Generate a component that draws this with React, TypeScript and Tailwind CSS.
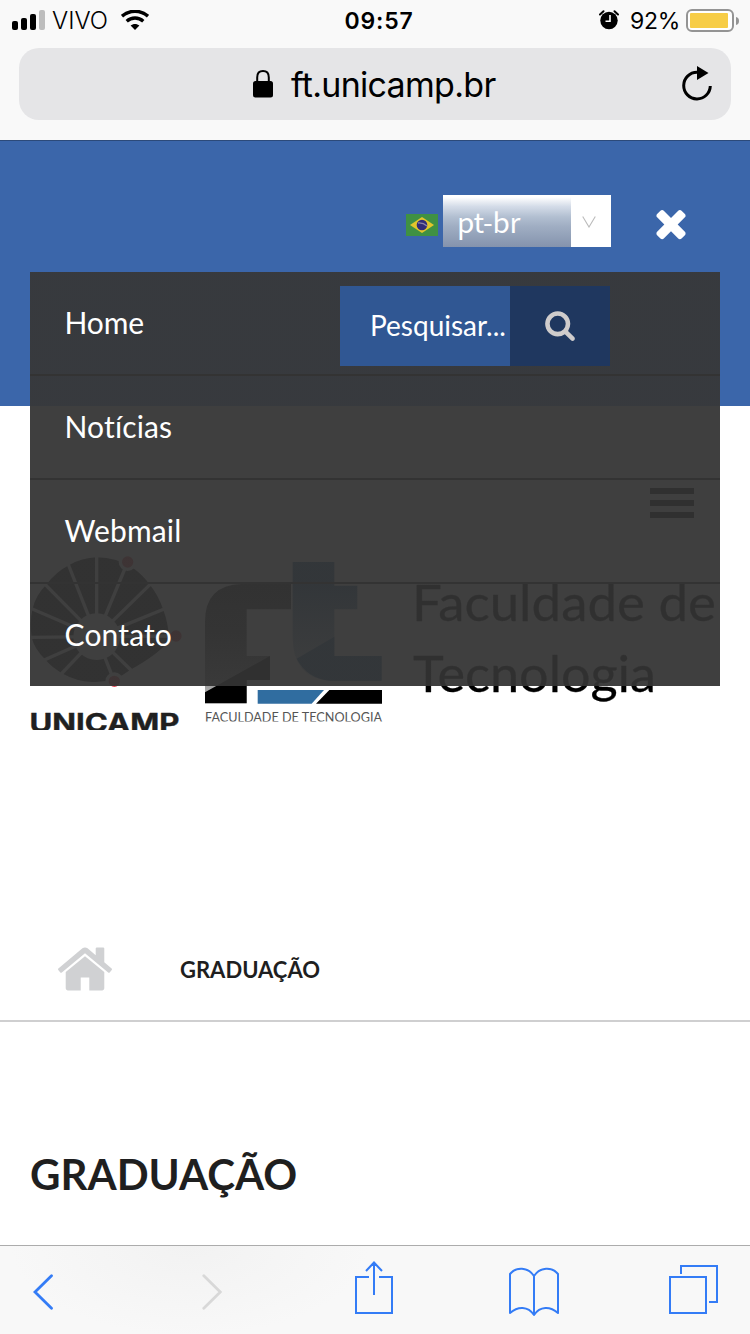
import React from "react";

const TIMES =
  "M1490 1322q0 40-28 68l-136 136q-28 28-68 28t-68-28l-294-294-294 294q-28 28-68 28t-68-28l-136-136q-28-28-28-68t28-68l294-294-294-294q-28-28-28-68t28-68l136-136q28-28 68-28t68 28l294 294 294-294q28-28 68-28t68 28l136 136q28 28 28 68t-28 68l-294 294 294 294q28 28 28 68z";
const HOME =
  "M1472 992v480q0 26-19 45t-45 19h-384v-384h-256v384h-384q-26 0-45-19t-19-45v-480q0-1 .5-3t.5-3l575-474 575 474q1 2 1 6zm223-69l-62 74q-8 9-21 11h-3q-13 0-21-7l-692-577-692 577q-12 8-24 7-13-2-21-11l-62-74q-8-10-7-23.5t11-21.5l719-599q32-26 76-26t76 26l244 204v-195q0-14 9-23t23-9h192q14 0 23 9t9 23v408l219 182q10 8 11 21.5t-7 23.5z";
const SEARCH =
  "M1216 832q0-185-131.5-316.5t-316.5-131.5-316.5 131.5-131.5 316.5 131.5 316.5 316.5 131.5 316.5-131.5 131.5-316.5zm512 832q0 52-38 90t-90 38q-54 0-90-38l-343-342q-179 124-399 124-143 0-273.5-55.5t-225-150-150-225-55.5-273.5 55.5-273.5 150-225 225-150 273.5-55.5 273.5 55.5 225 150 150 225 55.5 273.5q0 220-124 399l343 343q37 37 37 90z";

function Glyph({ d, className }: { d: string; className: string }) {
  return (
    <svg viewBox="0 0 1792 1792" className={className} fill="currentColor">
      <path d={d} />
    </svg>
  );
}

function StatusBar() {
  return (
    <div className="grid h-10 grid-cols-3 items-center pl-3 pr-[11px] text-[24px] leading-10 text-black">
      <div className="flex items-center">
        <svg viewBox="0 0 34 20" className="h-5 w-[34px] shrink-0">
          <rect x="0" y="11" width="6" height="9" rx="2" />
          <rect x="9" y="8" width="6" height="12" rx="2" />
          <rect x="18" y="4" width="6" height="16" rx="2" />
          <rect x="27" y="0" width="6" height="20" rx="2" fill="#bdbdbd" />
        </svg>
        <span className="ml-[6px] w-[56px] whitespace-nowrap pt-0.5 font-light leading-[38px]">VIVO</span>
        <svg viewBox="0 0 28 20" className="ml-[13px] h-5 w-7" fill="none" stroke="#000">
          <path d="M1 6.2C8.500-.4 19.500-.4 27 6.200" strokeWidth="3.400" />
          <path d="M5.700 11.200C10.500 7 17.500 7 22.300 11.200" strokeWidth="3.400" />
          <path d="M9.600 15.600C12 13.300 16 13.300 18.400 15.600L14 20z" fill="#000" stroke="none" />
        </svg>
      </div>
      <div className="pl-[7px] pt-0.5 text-center text-[23px] font-semibold leading-[38px] tracking-[0.8px]">09:57</div>
      <div className="flex items-center justify-end">
        <svg viewBox="0 0 20 20" className="mr-px h-5 w-5">
          <circle cx="10" cy="10.500" r="8.700" />
          <path d="M1 4.500 4.500 1.200M19 4.500 15.500 1.200" stroke="#000" strokeWidth="2" strokeLinecap="round" />
          <path d="M11 5v6.200H6.500" fill="none" stroke="#fff" strokeWidth="1.600" />
        </svg>
        <span className="ml-[10px] w-[50px] whitespace-nowrap pt-0.5 text-[23px] leading-[38px] tracking-[-0.3px]">92%</span>
        <svg viewBox="0 0 53 24" className="ml-[6px] mt-0.5 h-6 w-[53px]">
          <rect x="1" y="1" width="46" height="21" rx="5" fill="#fff" stroke="#949494" strokeWidth="2" />
          <rect x="4" y="4" width="38" height="15" rx="1" fill="#f7cd46" />
          <path d="M50 8q3 .7 3 4t-3 4z" fill="#949494" />
        </svg>
      </div>
    </div>
  );
}

function AddressBar() {
  return (
    <div className="mx-[19px] mt-2 flex h-[72px] items-center rounded-[20px] bg-[#e5e5e7] pl-[234px] pr-[18px] text-black">
      <svg viewBox="0 0 20 28" className="h-7 w-5 shrink-0">
        <path d="M4.200 12V7.500Q4.200 1.100 10 1.100T15.800 7.500V12" fill="none" stroke="#000" strokeWidth="2" />
        <rect x="0" y="11" width="20" height="16.500" rx="2.500" />
      </svg>
      <span className="ml-[18px] whitespace-nowrap pt-px text-[34px] leading-[71px] tracking-[-0.7px]">ft.unicamp.br</span>
      <svg viewBox="0 0 32 38" className="ml-auto h-[38px] w-8 shrink-0">
        <path d="M16 7.300A13.300 13.300 0 1 0 29.300 21" fill="none" stroke="#000" strokeWidth="3" />
        <path d="M16 1v14l11.500-7z" />
      </svg>
    </div>
  );
}

function LanguageBar() {
  return (
    <div className="flex h-[52px] items-center pl-[406px]">
      <svg viewBox="0 0 32 22" className="mt-[7px] h-[22px] w-8">
        <rect width="32" height="22" fill="#3f9143" />
        <path d="M4 11 16 3l12 8-12 8z" fill="#e2c52c" />
        <circle cx="16" cy="11" r="5.300" fill="#312b79" />
        <path d="M12 9q5-.5 9 3" stroke="#8b83a8" strokeWidth="1.300" fill="none" />
      </svg>
      <div className="ml-[5px] flex h-[52px] w-[168px] bg-white">
        <div className="w-32 bg-[linear-gradient(180deg,#fff_0%,#fff_4%,#d4dce8_22%,#b2bfd1_42%,#a0aec3_60%,#8493ad_100%)] pl-[14px] font-['Noto_Sans_CJK_SC',sans-serif] text-[28px] leading-[52px] tracking-[-0.3px] text-white">
          pt-br
        </div>
        <svg viewBox="0 0 14 12" className="ml-[11px] mt-[21px] h-3 w-[14px]">
          <path d="M.7.500 7 11 13.300.500" fill="none" stroke="#bbb" strokeWidth="1.100" />
        </svg>
      </div>
      <Glyph d={TIMES} className="ml-[38px] mt-[3px] h-11 w-11 text-white" />
    </div>
  );
}

function DropdownMenu() {
  const row = "flex h-[104px] border-b-2 border-[#333] pl-[34.5px]";
  return (
    <nav className="absolute left-[30px] top-[131px] z-10 h-[414px] w-[690px] overflow-hidden bg-[linear-gradient(180deg,#373737f0_134px,#333333f0_134px)] font-[Lato,sans-serif] text-[30px] leading-[101px] tracking-[0.15px] text-white [font-variant-ligatures:none]">
      <div className={row}>
        <span className="w-[275.5px] tracking-[-0.1px]">Home</span>
        <div className="mt-[14px] flex h-20 w-[270px]">
          <div className="w-[170px] whitespace-nowrap bg-[#305793] pl-[30px] text-[28px] leading-[79px] tracking-normal">Pesquisar...</div>
          <div className="flex w-[100px] items-center justify-center bg-[#1f375f]">
            <Glyph d={SEARCH} className="mb-[3px] h-8 w-8 text-[#cfcccc]" />
          </div>
        </div>
      </div>
      <div className={row}>Notícias</div>
      <div className={row}>Webmail</div>
      <div className="h-[102px] pl-[34.5px]">Contato</div>
    </nav>
  );
}

function Logos() {
  const spokes = [
    [230, 40], [142, 66], [70, 128], [28, 203], [20, 292], [66, 363], [118, 408],
    [323, 66], [396, 128], [440, 204], [468, 288], [345, 402], [283, 424],
  ];
  const dots = [[323, 66], [468, 288], [283, 424]];
  return (
    <svg viewBox="30 540 690 200" className="ml-[30px] mt-[22px] block h-[200px] w-[690px]">
      <defs>
        <linearGradient id="fGray" x1="0" y1="0" x2="0" y2="1">
          <stop offset="0" stopColor="#222" />
          <stop offset=".4" stopColor="#444" />
          <stop offset=".9" stopColor="#aaa" />
        </linearGradient>
        <linearGradient id="tBlue" x1="0" y1="0" x2="0" y2="1">
          <stop offset=".2" stopColor="#306da0" />
          <stop offset=".85" stopColor="#c6d9e8" />
        </linearGradient>
        <clipPath id="unicampClip"><rect x="30" y="540" width="152" height="190" /></clipPath>
        <clipPath id="ftClip"><rect x="190" y="540" width="200" height="181.500" /></clipPath>
      </defs>
      <g transform="translate(20 540) scale(.33333)">
        <path d="M230 52Q290 52 340 85Q368 105 390 135Q415 165 430 210Q445 250 448 300Q420 340 330 390Q280 430 215 426Q170 424 130 402Q98 385 75 358Q42 325 35 292Q28 245 38 205Q48 165 78 135Q108 95 148 75Q185 54 230 52Z" fill="#202020" />
        {spokes.map(([x, y], i) => <path key={i} d={`M230 290L${x} ${y}`} stroke="#fff" strokeWidth="10" />)}
        <circle cx="230" cy="290" r="70" fill="#fff" />
        {dots.map(([x, y], i) => <circle key={i} cx={x} cy={y} r="22" fill="#e8414f" stroke="#fff" strokeWidth="10" />)}
      </g>
      <g clipPath="url(#unicampClip)">
        <text x="29.500" y="731.500" textLength="150" lengthAdjust="spacingAndGlyphs" fontFamily="Inter, sans-serif" fontWeight="700" fontSize="25" fill="#202020" stroke="#202020" strokeWidth=".4">UNICAMP</text>
      </g>
      <g clipPath="url(#ftClip)">
        <g transform="translate(190 540) scale(.33333)">
          <path d="M45 490V245Q45 135 155 132H303V208H170V348H240V420H170V490Z" fill="url(#fGray)" />
          <path d="M45 457 240 348V420H170V490H45Z" fill="#000" />
          <path d="M308 66H433V137H502V208H433V348H575V422H420Q308 415 308 290Z" fill="url(#tBlue)" />
          <path d="M320 356 433 290V348H575V422H420Q350 415 320 356Z" fill="#306da0" />
          <path d="M203 450H402L365 491H203Z" fill="#306da0" />
          <path d="M418 450H576V491H378Z" fill="#000" />
        </g>
        <text x="205" y="722" textLength="177" lengthAdjust="spacingAndGlyphs" fontFamily="Lato, sans-serif" fontSize="14" fill="#555">FACULDADE DE TECNOLOGIA</text>
      </g>
      <g fontFamily="Lato, sans-serif" fontSize="50" fill="#000" stroke="#000" strokeWidth=".3">
        <text x="412" y="621" textLength="304" lengthAdjust="spacingAndGlyphs">Faculdade de</text>
        <text x="413" y="691.500" textLength="243" lengthAdjust="spacingAndGlyphs">Tecnologia</text>
      </g>
    </svg>
  );
}

function Toolbar() {
  return (
    <footer className="flex h-[89px] shrink-0 items-start border-t border-[#acacac] bg-[#f8f8f8] bg-[radial-gradient(ellipse_180px_90px_at_190px_0px,#f2f2f2,#f8f8f8)] text-[#347cf6]">
      <svg viewBox="0 0 20 36" className="ml-[33px] mt-7 h-9 w-5" fill="none" stroke="currentColor" strokeWidth="2.800" strokeLinecap="round">
        <path d="M18.500 1.800 2 18 18.500 34.200" />
      </svg>
      <svg viewBox="0 0 20 36" className="ml-[149px] mt-7 h-9 w-5 text-[#d8d8d8]" fill="none" stroke="currentColor" strokeWidth="2.800" strokeLinecap="round">
        <path d="M1.800 1.800 18.300 18 1.800 34.200" />
      </svg>
      <svg viewBox="0 0 38 54" className="ml-[133px] mt-[14px] h-[54px] w-[38px]" fill="none" stroke="currentColor" strokeWidth="2">
        <path d="M14 17H1V53H37V17H24M19 35V3M11 11 19 2.500 27 11" />
      </svg>
      <svg viewBox="0 0 50 50" className="ml-[116px] mt-[21px] h-[50px] w-[50px]" fill="none" stroke="currentColor" strokeWidth="2" strokeLinejoin="round">
        <path d="M25 9C19-.2 7-.2 1 7V46C9 39 19 39 25 48C31 39 41 39 49 46V7C43-.2 31-.2 25 9ZM25 9V48" />
      </svg>
      <svg viewBox="0 0 50 50" className="ml-[110px] mt-[19px] h-[50px] w-[50px]" fill="none" stroke="currentColor" strokeWidth="2">
        <path d="M1 12H37V48H1ZM12 9V1H48V37H40" />
      </svg>
    </footer>
  );
}

export default function App() {
  return (
    <div className="flex h-[1334px] w-[750px] flex-col overflow-hidden bg-white font-[Inter,sans-serif]">
      <header className="h-[141px] shrink-0 border-b border-[#2c4a7a] bg-[#f9f9f9]">
        <StatusBar />
        <AddressBar />
      </header>
      <main className="relative flex-1 font-[Lato,sans-serif] text-[#1f1f1f]">
        <div className="h-[265px] bg-[#3b66aa] pt-[54px]">
          <LanguageBar />
        </div>
        <DropdownMenu />
        <div className="flex h-[112px] flex-col items-end gap-[6px] pr-14 pt-[82px]">
          <div className="h-[6px] w-11 shrink-0 bg-black" />
          <div className="h-[6px] w-11 shrink-0 bg-black" />
          <div className="h-[6px] w-11 shrink-0 bg-black" />
        </div>
        <Logos />
        <div className="mt-[180px] flex h-[102px] items-center border-b-2 border-[#cfcfd0] pb-[3px] pl-[55px]">
          <Glyph d={HOME} className="h-[60px] w-[60px] text-[#d0d1d3]" />
          <span className="ml-[65px] pt-0.5 text-[22px] font-bold">GRADUAÇÃO</span>
        </div>
        <h1 className="mt-[124px] pl-[30px] text-[42px] font-bold leading-[56px]">GRADUAÇÃO</h1>
      </main>
      <Toolbar />
    </div>
  );
}
